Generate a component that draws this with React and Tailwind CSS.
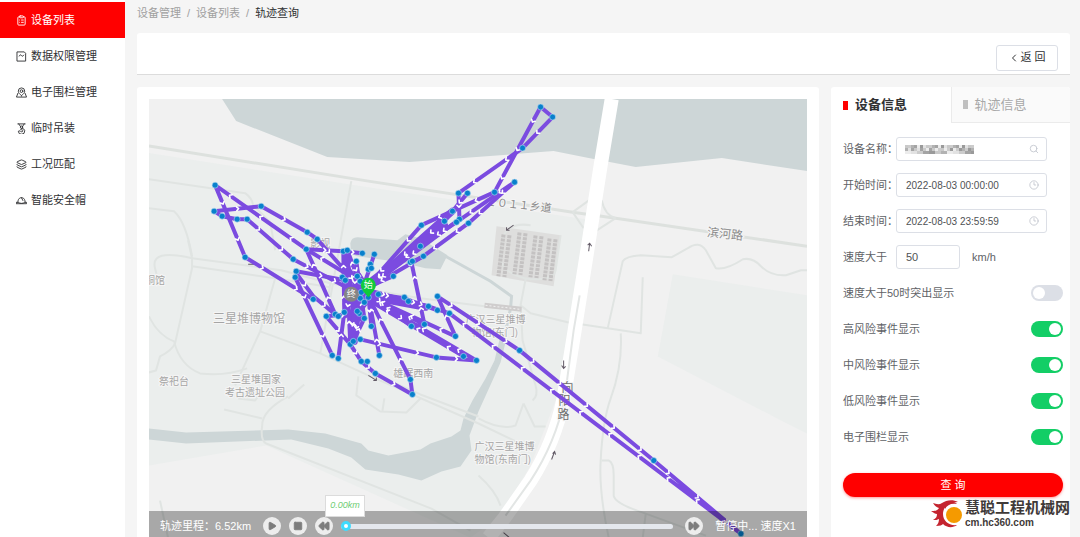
import { useState } from "react";
import { ChevronLeft, ClipboardList, Clock3, Layers, Play, Rewind, FastForward, Search, Square } from "lucide-react";
import clsx from "clsx";

const iconProps = {
  viewBox: "0 0 24 24",
  fill: "none",
  stroke: "currentColor",
  strokeWidth: 2,
  strokeLinecap: "round",
  strokeLinejoin: "round",
};

function DataIcon({ className }) {
  return (
    <svg {...iconProps} className={className}>
      <path d="M3 2h15l3 3v17H3z" />
      <path d="M7 11c2-4 4-3 5-1s3 2 5-1" />
    </svg>
  );
}

function FenceIcon({ className }) {
  return (
    <svg {...iconProps} className={className}>
      <path d="M12 19c-4-4-7-6-7-10a7 7 0 0 1 14 0c0 4-3 6-7 10z" />
      <circle cx="12" cy="9" r="3" />
      <path d="M4 14l-3 8h22l-3-8" />
    </svg>
  );
}

function HookIcon({ className }) {
  return (
    <svg {...iconProps} className={className}>
      <path d="M4 2h16M6 2l4 6M18 2l-4 6" />
      <circle cx="12" cy="9" r="2.5" />
      <path d="M12 12c6 0 7 3 7 5a6 6 0 0 1-14 1l4-1c1 3 6 3 6 0 0-2-3-2-5-3" />
    </svg>
  );
}

function HelmetIcon({ className }) {
  return (
    <svg {...iconProps} className={className}>
      <path d="M4 16c0-5 2-9 6-10h4c4 1 6 5 6 10" />
      <path d="M12 6l3 6M1 16h4c4 3 10 3 14 0h4v3H1z" />
    </svg>
  );
}

const menu = [
  { label: "设备列表", icon: ClipboardList, active: true },
  { label: "数据权限管理", icon: DataIcon },
  { label: "电子围栏管理", icon: FenceIcon },
  { label: "临时吊装", icon: HookIcon },
  { label: "工况匹配", icon: Layers },
  { label: "智能安全帽", icon: HelmetIcon },
];

function Sidebar() {
  return (
    <nav className="w-[125px] shrink-0 bg-white pt-0.5">
      {menu.map(({ label, icon: Icon, active }) => (
        <a
          key={label}
          href="#"
          className={clsx(
            "flex h-9 items-center gap-1 pl-4 text-[11px]",
            active ? "bg-[#ff0000] text-white" : "text-[#303133]"
          )}
        >
          <Icon className="size-[11px]" strokeWidth={2} />
          {label}
        </a>
      ))}
    </nav>
  );
}

// Vehicle track, one polyline per trip
const tracks = [
  [[368, 287], [306, 249], [215, 185], [245, 257], [313, 299]],
  [[214, 211], [261, 206], [307, 232], [317, 239], [362, 290]],
  [[214, 211], [222, 216], [237, 219], [247, 219], [293, 259], [348, 288]],
  [[296, 271], [345, 280]],
  [[295, 277], [332, 355]],
  [[296, 273], [313, 296], [335, 314]],
  [[335, 314], [306, 249], [343, 251], [362, 253]],
  [[326, 316], [350, 344], [361, 361], [375, 373], [412, 394], [410, 379], [370, 300]],
  [[338, 358], [344, 312], [343, 251], [368, 288]],
  [[326, 316], [359, 313], [353, 341], [357, 276], [347, 250]],
  [[353, 341], [364, 318], [356, 261], [350, 344], [348, 300]],
  [[360, 339], [436, 357], [476, 360], [370, 298]],
  [[463, 356], [372, 302]],
  [[379, 355], [368, 295], [371, 326]],
  [[368, 292], [411, 326], [424, 324], [366, 296]],
  [[424, 324], [411, 262], [423, 256]],
  [[455, 336], [368, 296]],
  [[368, 290], [428, 306], [449, 313]],
  [[370, 293], [404, 298], [437, 310]],
  [[455, 336], [437, 296], [519, 350], [653, 460], [740, 533], [449, 313]],
  [[540, 107], [552, 117], [522, 148], [458, 193]],
  [[540, 107], [494, 192], [421, 225], [368, 285]],
  [[458, 193], [459, 219], [368, 287]],
  [[467, 193], [452, 211], [444, 221], [366, 287]],
  [[514, 182], [456, 222], [420, 246], [366, 287]],
  [[514, 182], [468, 223], [423, 256], [368, 288]],
  [[374, 254], [369, 269], [358, 300]],
  [[393, 276], [350, 294], [345, 316]],
];

// overlapping trips that merge into solid bands
const bands = [
  "M452 211L416 243L370 285",
  "M444 225L372 280",
  "M345 252L350 292L362 318",
  "M360 280L354 341",
  "M357 300L351 340",
  "M344 265L366 296L425 307",
  "M358 276L366 300L357 312L348 296",
  "M346 304L362 292",
];

const stops = [
  [215, 185], [214, 211], [222, 216], [237, 219], [247, 219], [261, 206], [307, 232], [317, 239],
  [306, 249], [245, 257], [293, 259], [296, 271], [295, 277], [313, 299], [326, 316], [335, 314],
  [338, 316], [344, 312], [332, 355], [338, 358], [350, 344], [353, 341], [360, 339], [361, 361],
  [367, 361], [375, 373], [379, 355], [412, 394], [410, 379], [371, 326], [364, 318], [359, 313],
  [357, 311], [343, 251], [347, 250], [362, 253], [356, 261], [342, 277], [345, 280], [357, 276],
  [360, 281], [374, 254], [370, 264], [368, 269], [371, 268], [393, 276], [378, 294], [404, 297],
  [408, 301], [428, 306], [437, 310], [449, 313], [437, 296], [455, 336], [411, 326], [424, 324],
  [463, 356], [476, 360], [436, 357], [519, 350], [653, 460], [740, 533], [540, 107], [552, 117],
  [522, 148], [514, 182], [494, 192], [458, 193], [467, 193], [452, 211], [444, 221], [459, 219],
  [456, 222], [468, 223], [421, 225], [420, 246], [423, 256], [410, 262], [412, 261], [360, 298],
  [364, 302], [368, 297], [361, 292],
];

// direction chevrons spread evenly over every segment
const chevrons = tracks.flatMap((track) =>
  track.slice(1).flatMap(([x2, y2], i) => {
    const [x1, y1] = track[i];
    const count = Math.round(Math.hypot(x2 - x1, y2 - y1) / 36);
    const angle = (Math.atan2(y2 - y1, x2 - x1) * 180) / Math.PI;
    return Array.from({ length: count }, (_, n) => {
      const t = (n + 0.5) / count;
      return { x: x1 + (x2 - x1) * t, y: y1 + (y2 - y1) * t, angle };
    });
  })
);

const minorRoads = [
  "M149 179L245 193Q252 198 253 205L270 222L275 250",
  "M149 208L174 211Q186 222 192 256",
  "M351 181L335 270L320 353",
  "M192 258Q150 248 155 268L157 276M192 258L188 240M192 258V268L175 343Q172 350 160 356L156 370L149 372",
  "M192 258L281 270L330 283L420 298L500 308",
  "M192 266L275 278L330 287M275 278L260 331L235 385",
  "M149 316Q158 335 174 341Q180 365 200 373Q225 376 247 368M288 398L304 384M330 283L326 310",
  "M260 331L320 353L368 375L478 423L530 448",
  "M368 371L420 394L478 416",
  "M288 396Q262 410 262 425Q260 440 266 443L431 508L470 530",
  "M224 409L262 418M238 398L255 400L262 390",
  "M358 376L356 395L380 411L406 412L420 398M384 398L382 411",
  "M520 305L530 313L567 322L607 328L640 333L642 277",
  "M607 328L622 261Q625 256 640 255L671 257L687 248Q698 240 705 250L715 268Q725 270 742 259Q752 257 760 266Q770 276 785 275L800 270H806",
  "M620 333Q622 365 610 398Q602 420 600 460Q598 490 608 537",
  "M601 460H608Q613 462 613 475V495Q614 503 645 513L705 535M645 513L642 537",
  "M520 305L522 340L535 385Q538 395 532 400",
  "M478 418Q500 430 515 425L523 403M523 403L534 426H545M478 475Q495 490 500 505",
  "M525 279L520 305M560 235L555 270Q553 280 530 279Q505 275 500 260L503 235Q510 222 530 225",
  "M572 212L590 199M572 212L583 228M615 218Q604 215 601 200M615 218L595 231",
  "M160 500L168 537",
];

const buildings = [
  [500, 234, 9], [516, 232, 9], [532, 235, 9], [546, 238, 9],
];

function TrackMap() {
  return (
    <svg
      viewBox="149 99 657 438"
      preserveAspectRatio="xMidYMin slice"
      className="block h-[438px] w-full font-['Noto_Sans_CJK_SC',sans-serif]"
      role="img"
      aria-label="轨迹地图"
    >
      <rect x="0" y="0" width="1200" height="700" fill="#f1f1f1" />
      <path d="M149 153L368 187L585 219L570 320L555 400L530 465L500 515L470 537L266 445L149 465Z" fill="#ebeeed" />
      <path d="M672 274L806 295V433L780 420L657 356Z" fill="#ebeeed" />
      <g fill="#cdd6d7">
        <path d="M222 99L236 121L327 157L409 162L553 151L588 158L635 167L721 158L806 171V99Z" />
        <path d="M149 428L186 432L288 429L325 433L361 443L368 450L388 455L420 449L430 443L451 436L460 430L463 418L472 400L485 378L494 360L500 335L506 338L500 362L492 380L478 411L469 435L471 450L460 466L441 471L421 480L398 474L365 469L351 457L328 448L291 439L186 443L149 439Z" />
        <path d="M350 243Q351 237 357 237L397 240L405 234L420 238L447 255L440 269L425 268L400 262L357 256Q350 255 350 243Z" />
      </g>
      <path d="M445 256L490 281L511 296L510 308L502 345" fill="none" stroke="#cdd6d7" strokeWidth="3" />
      <path d="M496 226L560 235L553 286L491 275Z" fill="#dededd" />

      <g fill="none" strokeLinejoin="round">
        <path d="M149 146L368 181L572 212L615 218L806 246" stroke="#dde1de" strokeWidth="3" />
        {minorRoads.map((d) => (
          <path key={d} d={d} stroke="#e0e4e2" strokeWidth="2" />
        ))}
        <path d="M484 305L521 309" stroke="#cfcdcd" strokeWidth="5" />
        <path d="M485 305L520 309" stroke="#f0f0f0" strokeWidth="1" strokeDasharray="2 2" />
        <path d="M611 99L600 165L587 248L574 330L563 398Q554 442 530 480L504 517L488 537" stroke="#fff" strokeWidth="14" />
        <path d="M579 295L573 330L564 398Q555 442 530 480L505 515" stroke="#e3e6e5" strokeWidth="2" />
      </g>

      {buildings.map(([x, y, w]) => (
        <g key={x} transform={`rotate(7 ${x} ${y})`}>
          <path d={`M${x + 3} ${y}v42M${x + w} ${y}v42`} stroke="#c4c2c2" strokeWidth="4" strokeDasharray="3 1" />
        </g>
      ))}

      <g fill="#a5a5a5" fontSize="10" stroke="#f5f5f5" strokeWidth="2" paintOrder="stroke">
        <text x="213" y="323" fontSize="12">三星堆博物馆</text>
        <text x="231" y="383">三星堆国家</text>
        <text x="225" y="396">考古遗址公园</text>
        <text x="159" y="385">祭祀台</text>
        <text x="145" y="284">铜馆</text>
        <text x="393" y="377">雄踞西南</text>
        <text x="310" y="247">影视</text>
        <text x="465" y="323">广汉三星堆博</text>
        <text x="471" y="336">物馆(东门)</text>
        <text x="474" y="449">广汉三星堆博</text>
        <text x="474" y="462">物馆(东南门)</text>
        <g fill="#8b8b8b" fontSize="11">
          <text x="485" y="205" transform="rotate(6 485 205)">２０１１乡道</text>
          <text x="706" y="236" fontSize="12" transform="rotate(6 706 236)">滨河路</text>
        </g>
        <g fill="#6f6f6f" fontSize="12">
          <text x="561" y="392">向</text>
          <text x="558" y="405">阳</text>
          <text x="557" y="419">路</text>
        </g>
      </g>

      <g fill="none" stroke="#625a66" strokeWidth="1">
        <path d="M506 230L513 225M506 227V230H509" />
        <path d="M588 251L589 243M587 245L589 243L591 246" />
        <path d="M563 360V368M561 365L563 368L565 366" />
        <path d="M551 459L554 451M552 453L554 451L555 454" />
        <path d="M368 375L376 380M373 380H376V377M503 532L509 537M248 264H254" />
      </g>

      <g fill="none" strokeLinejoin="round" strokeLinecap="round">
        {tracks.map((track, i) => (
          <polyline key={i} points={track.join(" ")} stroke="#7b4be0" strokeWidth="4" />
        ))}
        {bands.map((d) => (
          <path key={d} d={d} stroke="#7b4be0" strokeWidth="7" />
        ))}
        {chevrons.map((c, i) => (
          <path
            key={i}
            d="M-1 -2L1 0L-1 2"
            stroke="#fff"
            strokeWidth="1.6"
            transform={`translate(${c.x} ${c.y}) rotate(${c.angle})`}
          />
        ))}
      </g>
      {stops.map(([x, y], i) => (
        <circle key={i} cx={x} cy={y} r="3" fill="#0880cc" stroke="#b9dcf0" strokeWidth="0.6" />
      ))}

      <g fontSize="9" textAnchor="middle" fill="#fff">
        <circle cx="351" cy="294" r="7.5" fill="#858585" />
        <text x="351" y="297">终</text>
        <path d="M362 290L368 297L374 290Z" fill="#10cb3c" />
        <circle cx="368" cy="285" r="7.5" fill="#10cb3c" />
        <text x="368" y="288">始</text>
      </g>
    </svg>
  );
}

function PlayerButton({ label, children }) {
  return (
    <button
      type="button"
      aria-label={label}
      className="flex size-[18px] shrink-0 items-center justify-center rounded-full bg-[#ededed] text-[#7d7d7d]"
    >
      {children}
    </button>
  );
}

function PlayerBar() {
  const [position, setPosition] = useState(0);

  return (
    <div className="absolute inset-x-0 bottom-0 flex h-[26px] items-center gap-3 bg-black/30 px-[11px] pt-1 text-[11px] text-white">
      <span className="whitespace-nowrap">轨迹里程：6.52km</span>
      <div className="flex flex-1 items-center gap-2">
        <PlayerButton label="播放">
          <Play className="size-2.5 fill-current" />
        </PlayerButton>
        <PlayerButton label="停止">
          <Square className="size-2.5 fill-current" />
        </PlayerButton>
        <PlayerButton label="后退">
          <Rewind className="size-3 fill-current" />
        </PlayerButton>
        <div className="relative flex flex-1 items-center">
          <input
            type="range"
            min="0"
            max="100"
            value={position}
            onChange={(e) => setPosition(Number(e.target.value))}
            aria-label="轨迹进度"
            className="h-[5px] w-full appearance-none rounded-full bg-[#e4e7ed] [&::-webkit-slider-thumb]:size-2.5 [&::-webkit-slider-thumb]:appearance-none [&::-webkit-slider-thumb]:rounded-full [&::-webkit-slider-thumb]:border-[3px] [&::-webkit-slider-thumb]:border-[#3fdcff] [&::-webkit-slider-thumb]:bg-white"
          />
          <output className="absolute bottom-3 -left-4 flex h-[22px] w-10 items-center justify-center border border-[#dcdcdc] bg-white text-[9px] text-[#6fce74] italic">
            0.00km
          </output>
        </div>
      </div>
      <PlayerButton label="快进">
        <FastForward className="size-3 fill-current" />
      </PlayerButton>
      <span className="whitespace-nowrap">暂停中... 速度X1</span>
    </div>
  );
}

const inputClass =
  "h-6 w-full rounded-[3px] border border-[#dcdfe6] bg-white px-[9px] text-[#505255] outline-none";

function Field({ id, label, value, icon: Icon, children }) {
  return (
    <div className="flex h-6 items-center">
      <label htmlFor={id} className="w-[53px] shrink-0 whitespace-nowrap">
        {label}
      </label>
      <div className="relative mr-4 flex-1">
        <input id={id} defaultValue={value} className={clsx(inputClass, "text-[10px]")} />
        {children}
        <Icon className="absolute top-[7px] right-2 size-2.5 text-[#c0c4cc]" />
      </div>
    </div>
  );
}

const shades = ["#c9c9c9", "#a4a4a4", "#e2e2e2", "#b2b2b2", "#9a9a9a", "#cccccc", "#ececec"];

// hidden device number
function Mosaic() {
  return (
    <svg viewBox="0 0 69 9" className="absolute top-2 left-[9px] h-[9px] w-[69px]" aria-hidden="true">
      {Array.from({ length: 69 }, (_, i) => {
        const col = i % 23;
        const row = Math.floor(i / 23);
        return <rect key={i} x={col * 3} y={row * 3} width="3" height="3" fill={shades[(col * 5 + row * 3 + ((col * row) % 4)) % 7]} />;
      })}
    </svg>
  );
}

function Toggle({ id, label, on }) {
  return (
    <div className="flex h-6 items-center justify-between">
      <label htmlFor={id}>{label}</label>
      <input
        id={id}
        type="checkbox"
        defaultChecked={on}
        className="h-4 w-8 appearance-none rounded-full bg-[#dcdfe6] p-0.5 before:block before:size-3 before:rounded-full before:bg-white checked:bg-[#13ce66] checked:before:translate-x-4"
      />
    </div>
  );
}

const toggles = [
  { id: "speed50", label: "速度大于50时突出显示", on: false },
  { id: "high", label: "高风险事件显示", on: true },
  { id: "mid", label: "中风险事件显示", on: true },
  { id: "low", label: "低风险事件显示", on: true },
  { id: "fence", label: "电子围栏显示", on: true },
];

function DevicePanel() {
  return (
    <aside className="w-[239px] shrink-0 rounded-t-[3px] bg-white text-[11px] text-[#606266]">
      <div className="grid h-9 grid-cols-2 text-[13px]">
        <button type="button" className="flex items-center gap-[7px] pl-3 font-bold text-[#303133]">
          <span className="h-[9px] w-[5px] bg-[#ff0000]" />
          设备信息
        </button>
        <button
          type="button"
          className="flex items-center gap-[7px] rounded-tr-[3px] border-b border-l border-[#ebebeb] bg-[#fafafa] pl-[11px] text-[#a8a8a8]"
        >
          <span className="h-[9px] w-[5px] bg-[#c0c0c0]" />
          轨迹信息
        </button>
      </div>
      <form className="flex flex-col gap-3 pt-[14px] pr-[7px] pb-3 pl-3" onSubmit={(e) => e.preventDefault()}>
        <Field id="device" label="设备名称：" value="" icon={Search}>
          <Mosaic />
        </Field>
        <Field id="start" label="开始时间：" value="2022-08-03 00:00:00" icon={Clock3} />
        <Field id="end" label="结束时间：" value="2022-08-03 23:59:59" icon={Clock3} />
        <div className="flex h-6 items-center">
          <label htmlFor="speed" className="w-[53px] shrink-0">
            速度大于
          </label>
          <div className="w-16">
            <input id="speed" defaultValue="50" className={inputClass} />
          </div>
          <span className="ml-3">km/h</span>
        </div>
        {toggles.map((t) => (
          <Toggle key={t.id} {...t} />
        ))}
        <button type="submit" className="mt-3 h-6 rounded-full bg-[#ff0000] text-white shadow-sm shadow-red-300">
          查 询
        </button>
      </form>
    </aside>
  );
}

function Watermark() {
  return (
    <div className="absolute right-2.5 bottom-2 flex items-center gap-0.5 text-[#3f3a39]">
      <svg viewBox="0 0 32 28" className="h-7 w-8" aria-hidden="true">
        <path
          d="M27 2C22-1 15 0 11 3C8 5 5 4 2 3C4 6 5 7 8 8C6 11 4 11 0 11C3 13 4 14 6 14C6 17 5 18 2 20C5 20 6 20 8 19C8 22 7 24 5 26C9 26 11 25 12 24C16 28 22 28 26 25C18 26 12 21 12 14C12 7 18 2 27 2Z"
          fill="#c4242f"
        />
        <path d="M14 5C18 1 23 1 26 4C20 3 16 5 14 9Z" fill="#c4242f" />
        <circle cx="23" cy="15" r="8" fill="#f59a00" />
      </svg>
      <div className="flex flex-col font-bold">
        <span className="text-[15px] leading-[18px]">慧聪工程机械网</span>
        <span className="text-[10px] leading-3">cm.hc360.com</span>
      </div>
    </div>
  );
}

export default function App() {
  return (
    <div className="relative flex min-h-screen bg-[#f5f5f5] font-['Liberation_Sans','Noto_Sans_CJK_SC',sans-serif]">
      <Sidebar />
      <main className="flex min-w-0 flex-1 flex-col pr-2.5 pl-3">
        <nav className="mb-1.5 flex h-[27px] items-center gap-1.5 text-[11px] text-[#a0a0a0]" aria-label="导航">
          <a href="#">设备管理</a>
          <span>/</span>
          <a href="#">设备列表</a>
          <span>/</span>
          <span className="text-[#303133]">轨迹查询</span>
        </nav>
        <header className="mb-3 flex h-[42px] items-center justify-end rounded-t-[3px] border-b border-[#dcdcdc] bg-white px-3 pt-2">
          <button
            type="button"
            className="flex h-[26px] w-[62px] items-center justify-center rounded-[3px] border border-[#dcdfe6] bg-white text-[11px] text-[#303133]"
          >
            <ChevronLeft className="size-3" strokeWidth={2} />
            返 回
          </button>
        </header>
        <div className="flex flex-1 gap-3">
          <section className="min-w-0 flex-1 rounded-t-[3px] bg-white px-3 pt-3">
            <div className="relative">
              <TrackMap />
              <PlayerBar />
            </div>
          </section>
          <DevicePanel />
        </div>
      </main>
      <Watermark />
    </div>
  );
}
